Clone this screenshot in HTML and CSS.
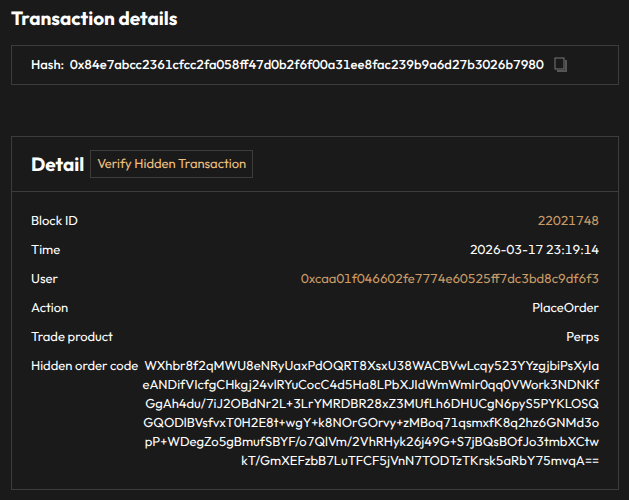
FILE: index.html
```html
<!DOCTYPE html>
<html lang="en">
<head>
  <meta charset="UTF-8">
  <meta name="viewport" content="width=device-width, initial-scale=1.0">
  <title>Transaction details</title>
  <link rel="stylesheet" href="styles.css">
</head>
<body>

<main class="page">
  <h1 class="page-title">Transaction details</h1>

  <section class="hash-box">
    <span class="hash-label">Hash:</span>
    <span class="hash-value">0x84e7abcc2361cfcc2fa058ff47d0b2f6f00a31ee8fac239b9a6d27b3026b7980</span>
    <button class="copy-button" type="button" aria-label="Copy hash">
      <svg width="14" height="16" viewBox="0 0 14 16" fill="none">
        <path d="M12 3V14H3" stroke="#555" stroke-width="2"/>
        <rect x="1" y="1" width="9" height="11" fill="#1a1a1a" stroke="#777"/>
      </svg>
    </button>
  </section>

  <section class="detail">
    <div class="detail-header">
      <h2 class="detail-title">Detail</h2>
      <button class="verify-button" type="button">Verify Hidden Transaction</button>
    </div>
    <dl class="detail-list">
      <div class="row">
        <dt>Block ID</dt>
        <dd><a href="#">22021748</a></dd>
      </div>
      <div class="row">
        <dt>Time</dt>
        <dd>2026-03-17 23:19:14</dd>
      </div>
      <div class="row">
        <dt>User</dt>
        <dd><a href="#">0xcaa01f046602fe7774e60525ff7dc3bd8c9df6f3</a></dd>
      </div>
      <div class="row">
        <dt>Action</dt>
        <dd>PlaceOrder</dd>
      </div>
      <div class="row">
        <dt>Trade product</dt>
        <dd>Perps</dd>
      </div>
      <div class="row">
        <dt>Hidden order code</dt>
        <dd>
          WXhbr8f2qMWU8eNRyUaxPdOQRT8XsxU38WACBVwLcqy523YYzgjbiPsXyIa<br>
          eANDifVIcfgCHkgj24vlRYuCocC4d5Ha8LPbXJIdWmWmIr0qq0VWork3NDNKf<br>
          GgAh4du/7iJ2OBdNr2L+3LrYMRDBR28xZ3MUfLh6DHUCgN6pyS5PYKLOSQ<br>
          GQODlBVsfvxT0H2E8t+wgY+k8NOrGOrvy+zMBoq71qsmxfK8q2hz6GNMd3o<br>
          pP+WDegZo5gBmufSBYF/o7QlVm/2VhRHyk26j49G+S7jBQsBOfJo3tmbXCtw<br>
          kT/GmXEFzbB7LuTFCF5jVnN7TODTzTKrsk5aRbY75mvqA==
        </dd>
      </div>
    </dl>
  </section>
</main>

</body>
</html>
```
FILE: styles.css
```css
* {
  box-sizing: border-box;
}

body {
  margin: 0;
  background: #1a1a1a;
  color: #fff;
  font-family: Outfit, Lato, sans-serif;
  font-size: 13px;
  font-variant-numeric: tabular-nums;
  line-height: 19px;
  text-rendering: geometricPrecision;
}

h1,
h2,
dl,
dd {
  margin: 0;
}

button {
  background: none;
  font: inherit;
  font-variant-numeric: inherit;
  text-rendering: inherit;
  cursor: pointer;
}

a {
  color: #c99c67;
  text-decoration: none;
}

.page {
  padding: 6px 10px 10px 11px;
}

.page-title {
  font-size: 19px;
  font-weight: 700;
  line-height: 24px;
}

/* Hash */
.hash-box {
  display: flex;
  align-items: center;
  height: 40px;
  margin-top: 15px;
  padding: 0 19px;
  border: 1px solid #3c3c3c;
  font-weight: 500;
}

.hash-value {
  margin-left: 6px;
}

.copy-button {
  display: flex;
  margin-left: 10px;
  padding: 0;
  border: 0;
}

/* Detail card */
.detail {
  margin-top: 51px;
  border: 1px solid #3c3c3c;
}

.detail-header {
  display: flex;
  align-items: center;
  gap: 6px;
  height: 55px;
  padding: 0 19px;
  border-bottom: 1px solid #3c3c3c;
}

.detail-title {
  font-size: 19px;
  font-weight: 700;
  line-height: 24px;
}

.verify-button {
  height: 28px;
  padding: 0 6px;
  border: 1px solid #3c3c3c;
  color: #f0c080;
}

.detail-list {
  display: flex;
  flex-direction: column;
  gap: 10px;
  padding: 20px 19px 18px;
}

.row {
  display: flex;
  justify-content: space-between;
  gap: 4px;
}

.row dt {
  white-space: nowrap;
}

.row dd {
  text-align: right;
}
```
